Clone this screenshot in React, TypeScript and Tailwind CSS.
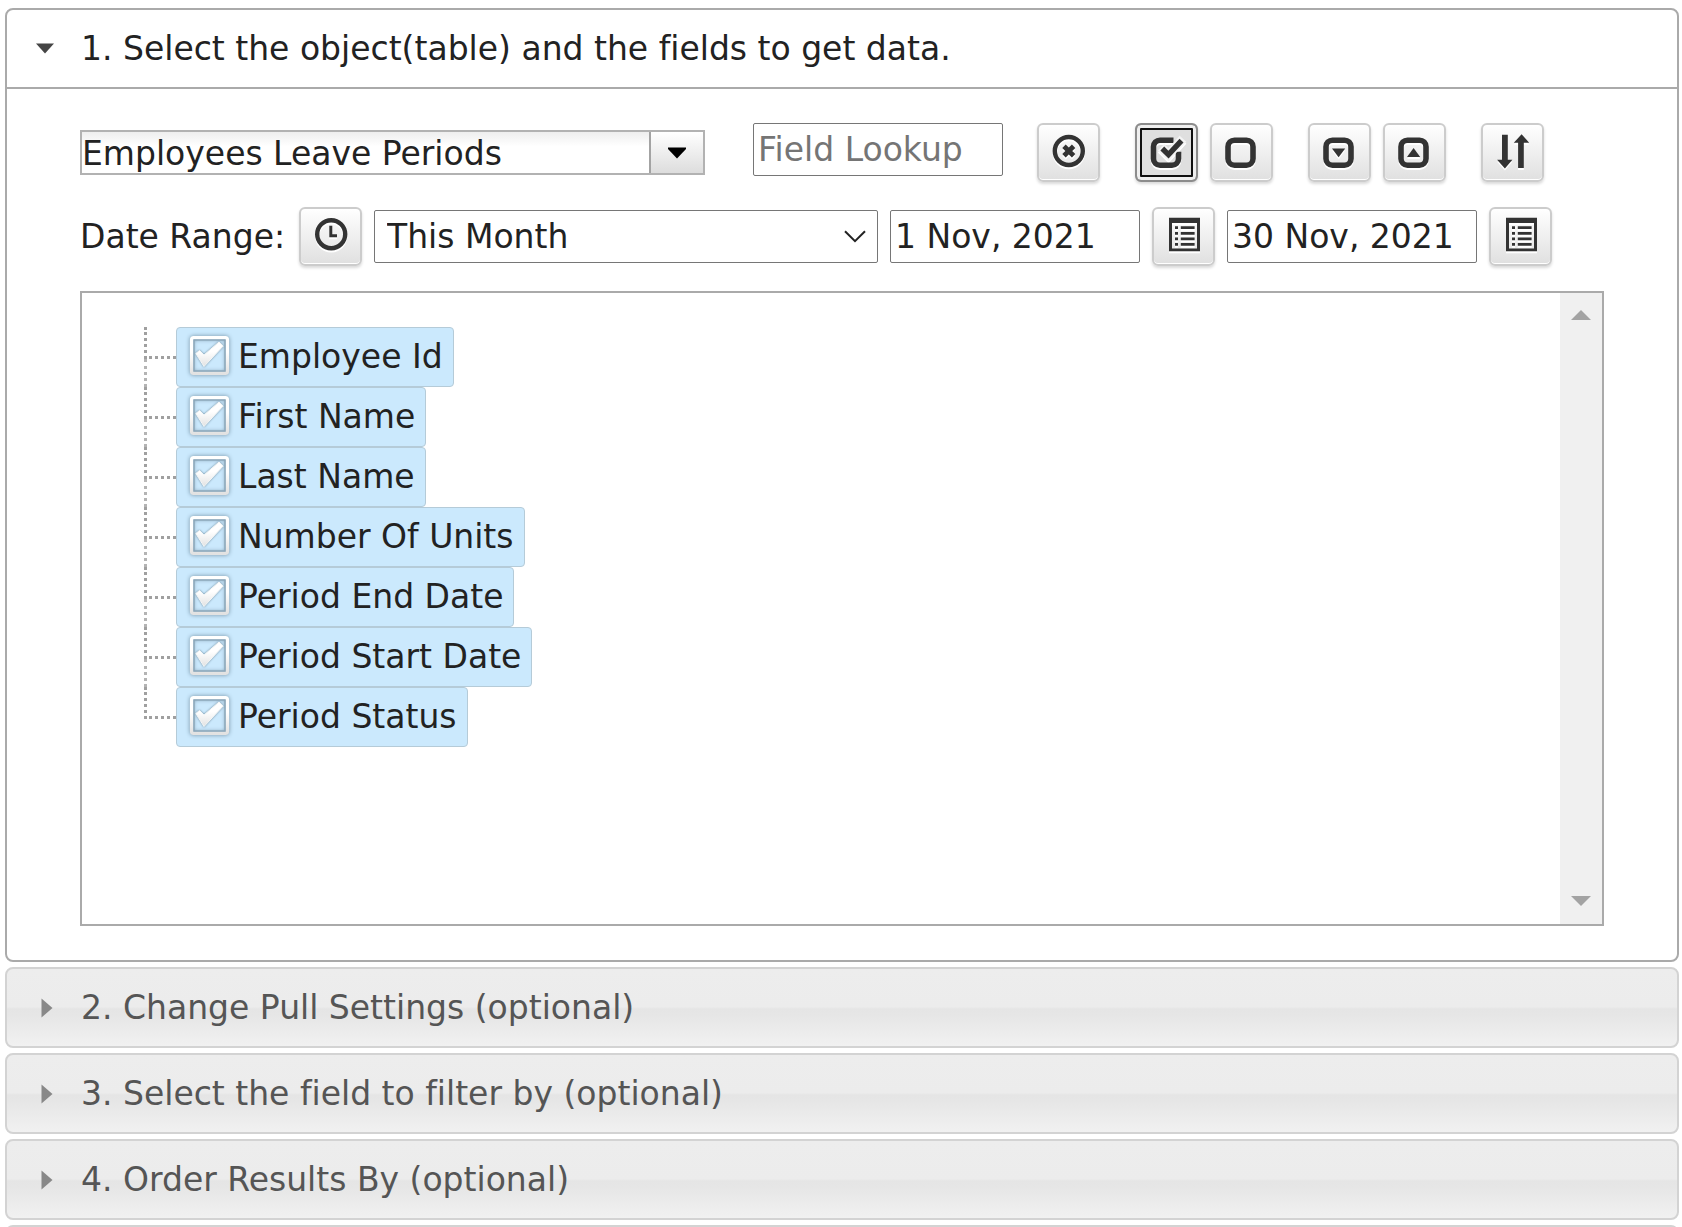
import React, { useState } from 'react';

const INK = '#333333';

function Icon({ children }: { children: React.ReactNode }) {
  return (
    <svg viewBox="0 0 40 40" className="size-10 shrink-0 drop-shadow-[0_2px_0_#ffffff]" fill="none" aria-hidden="true">
      {children}
    </svg>
  );
}

const ClockIcon = () => (
  <Icon>
    <circle cx="20.2" cy="17.2" r="14" stroke={INK} strokeWidth="4.4" />
    <path d="M19.8 8.7V18.7H26" stroke={INK} strokeWidth="3" />
  </Icon>
);

const ClearIcon = () => (
  <Icon>
    <circle cx="19.8" cy="18" r="14" stroke={INK} strokeWidth="4.4" />
    <path d="M15 13.2L24.6 22.8M24.6 13.2L15 22.8" stroke={INK} strokeWidth="4.8" />
  </Icon>
);

const CheckIcon = () => (
  <Icon>
    <path d="M26.5 7.2H13A6.5 6.5 0 0 0 6.5 13.7V25.7A6.5 6.5 0 0 0 13 32.2H25A6.5 6.5 0 0 0 31.5 25.7V18.7" stroke={INK} strokeWidth="5.6" />
    <path d="M14 14.2L21.5 21.7L36 5.7" stroke="#f4f4f4" strokeWidth="9" />
    <path d="M15.3 15.5L21.5 21.7L34.5 7.7" stroke={INK} strokeWidth="5.4" />
  </Icon>
);

const BoxShape = () => <rect x="6" y="7.2" width="25" height="25" rx="6.5" stroke={INK} strokeWidth="5.6" />;

const SquareIcon = () => (
  <Icon>
    <BoxShape />
  </Icon>
);

const SquareDownIcon = () => (
  <Icon>
    <BoxShape />
    <path d="M12 15.5H25.2L18.6 24.3Z" fill={INK} />
  </Icon>
);

const SquareUpIcon = () => (
  <Icon>
    <BoxShape />
    <path d="M12 23.9H25.2L18.6 15.1Z" fill={INK} />
  </Icon>
);

const SortIcon = () => (
  <Icon>
    <path d="M9 1.7H14.8V26.7H19.4L11.9 35.4L4.1 26.7H9Z" fill={INK} />
    <path d="M25.1 35V9.7H20.8L28.6 1.3L36.2 9.7H30.8V35Z" fill={INK} />
  </Icon>
);

const ListIcon = () => (
  <Icon>
    <path fillRule="evenodd" d="M5 0.8H36V34.2H5ZM8 6V31.4H33V6Z" fill={INK} />
    <path
      d="M11 10.7H14M16.8 10.7H30.6M11 16.3H14M16.8 16.3H30.6M11 21.8H14M16.8 21.8H30.6M11 27.4H14M16.8 27.4H30.6"
      stroke={INK}
      strokeWidth="2.8"
    />
  </Icon>
);

function ToolButton({ label, active, children }: { label: string; active?: boolean; children: React.ReactNode }) {
  return (
    <button
      type="button"
      aria-label={label}
      aria-pressed={active}
      className={
        active
          ? 'flex h-[59px] w-[63px] shrink-0 items-center justify-center rounded-md border-2 border-[#8c8c8c] bg-[#dfdfdf] shadow-[inset_0_0_0_3px_#efefef,inset_0_0_0_5px_#101010,0_2px_3px_rgba(0,0,0,0.15)]'
          : 'flex h-[59px] w-[63px] shrink-0 items-center justify-center rounded-md border-2 border-[#cccccc] bg-linear-to-b from-white to-[#e0e0e0] shadow-[inset_0_-1px_0_#ffffff,0_2px_3px_rgba(0,0,0,0.15)]'
      }
    >
      {children}
    </button>
  );
}

function DateField({ label, value }: { label: string; value: string }) {
  return (
    <input
      type="text"
      aria-label={label}
      defaultValue={value}
      className="h-[53px] w-[250px] rounded-xs border border-[#767676] bg-white px-1"
    />
  );
}

function TreeCheck() {
  return (
    <svg viewBox="0 0 42 44" className="h-11 w-[42px] shrink-0 overflow-visible" fill="none" aria-hidden="true">
      <defs>
        <linearGradient id="tick" x1="0" y1="0" x2="0" y2="1">
          <stop offset="0.4" stopColor="#ffffff" />
          <stop offset="1" stopColor="#e2e2e2" />
        </linearGradient>
      </defs>
      <g className="drop-shadow-[0_0_2px_#6f8c9f]">
        <rect x="3.7" y="4.7" width="35.6" height="35.6" rx="2" stroke="url(#tick)" strokeWidth="3.6" />
      </g>
      <rect x="6" y="7" width="31" height="31" stroke="#8aa5b8" strokeWidth="1.4" />
      <g className="drop-shadow-[0_0_1px_#6f8c9f]">
        <path d="M7.8 20.5L11.5 17.5L16 22L31 9L35.2 13L16 33.5Z" fill="url(#tick)" stroke="#f4f6f7" strokeWidth="1" strokeLinejoin="round" />
      </g>
    </svg>
  );
}

function TreeRow({ name, last }: { name: string; last: boolean }) {
  return (
    <li className="flex h-15">
      <span aria-hidden="true" className="flex w-8 flex-col">
        <span className="h-8 border-b-3 border-l-3 border-dotted border-[#a0a0a0]" />
        {!last && <span className="flex-1 border-l-3 border-dotted border-[#b4b4b4]" />}
      </span>
      <label className="flex items-center gap-2 rounded-[4px] border border-[#b5cbd8] bg-[#cbe9fd] pr-2.5 pl-[11px]">
        <input type="checkbox" defaultChecked className="sr-only" />
        <span className="-mt-1">
          <TreeCheck />
        </span>
        {name}
      </label>
    </li>
  );
}

const FIELDS = [
  'Employee Id',
  'First Name',
  'Last Name',
  'Number Of Units',
  'Period End Date',
  'Period Start Date',
  'Period Status',
];

const CLOSED = ['2. Change Pull Settings (optional)', '3. Select the field to filter by (optional)', '4. Order Results By (optional)', ''];

function ClosedSection({ title }: { title: string }) {
  return (
    <button
      type="button"
      aria-expanded="false"
      className="flex h-[81px] w-full shrink-0 items-center rounded-lg border-2 border-[#d3d3d3] bg-[linear-gradient(#ededed,#ececec_49%,#e5e5e5_52%,#e6e6e6_60%,#f1f1f1)] text-left text-[#555555]"
    >
      <span className="flex w-[74px] pl-[34px]">
        <svg viewBox="0 0 12 20" className="h-5 w-3" aria-hidden="true">
          <path d="M0.5 0.5L11.5 10L0.5 19.5Z" fill="#888888" />
        </svg>
      </span>
      {title}
    </button>
  );
}

export default function App() {
  const [query, setQuery] = useState('');
  return (
    <main className="flex h-screen flex-col gap-[5px] overflow-hidden bg-white pt-2 pr-[3px] pl-[5px] font-['DejaVu_Sans',Verdana,sans-serif] text-[33px] leading-10 text-[#222222] [font-variant-ligatures:none]">
      <section className="shrink-0 rounded-lg border-2 border-[#aaaaaa] bg-white">
        <h2 className="border-b-2 border-[#aaaaaa]">
          <button type="button" aria-expanded="true" className="flex h-[77px] w-full items-center text-left">
            <span className="flex w-[74px] pl-[29px]">
              <svg viewBox="0 0 18 11" className="h-[11px] w-[18px]" aria-hidden="true">
                <path d="M0 0.5H18L9 10.5Z" fill="#454545" />
              </svg>
            </span>
            1. Select the object(table) and the fields to get data.
          </button>
        </h2>

        <div className="flex flex-col gap-[25px] px-[73px] pt-[34px] pb-[34px]">
          <div className="flex items-center">
            <div className="flex h-[45px] w-[625px] border-2 border-[#b2b2b2]">
              <input
                type="text"
                aria-label="Object"
                defaultValue="Employees Leave Periods"
                className="min-w-0 flex-1 bg-linear-to-b from-[#eeeeee] to-white to-35% pt-0.5"
              />
              <button
                type="button"
                aria-label="Show objects"
                className="flex w-[54px] items-center justify-center border-l-2 border-[#a3a3a3] bg-linear-to-b from-white to-[#dddddd]"
              >
                <svg viewBox="0 0 18 12" className="h-3 w-[18px]" aria-hidden="true">
                  <path d="M0 0.5H18V2L9 11.5L0 2Z" fill="#000000" />
                </svg>
              </button>
            </div>
            <input
              type="text"
              aria-label="Field Lookup"
              placeholder="Field Lookup"
              value={query}
              onChange={(e) => setQuery(e.target.value)}
              className="ml-12 h-[53px] w-[250px] self-start rounded-xs border border-[#767676] bg-white px-1 placeholder:text-[#757575]"
            />
            <div className="ml-[34px] flex gap-[35px]">
              <ToolButton label="Clear lookup">
                <ClearIcon />
              </ToolButton>
              <div className="flex gap-3">
                <ToolButton label="Select all" active>
                  <CheckIcon />
                </ToolButton>
                <ToolButton label="Select none">
                  <SquareIcon />
                </ToolButton>
              </div>
              <div className="flex gap-3">
                <ToolButton label="Expand all">
                  <SquareDownIcon />
                </ToolButton>
                <ToolButton label="Collapse all">
                  <SquareUpIcon />
                </ToolButton>
              </div>
              <ToolButton label="Sort">
                <SortIcon />
              </ToolButton>
            </div>
          </div>

          <div className="flex items-center gap-3">
            <label htmlFor="range" className="w-[207px] shrink-0 whitespace-nowrap">
              Date Range:
            </label>
            <ToolButton label="Date range presets">
              <ClockIcon />
            </ToolButton>
            <div className="relative">
              <select
                id="range"
                className="h-[53px] w-[504px] appearance-none rounded-xs border border-[#767676] bg-white px-3"
              >
                <option>This Month</option>
              </select>
              <svg
                viewBox="0 0 22 13"
                className="pointer-events-none absolute top-5 right-3 h-[13px] w-[22px]"
                fill="none"
                aria-hidden="true"
              >
                <path d="M1 1.2L11 11.2L21 1.2" stroke="#222222" strokeWidth="2" />
              </svg>
            </div>
            <DateField label="Start date" value="1 Nov, 2021" />
            <ToolButton label="Pick start date">
              <ListIcon />
            </ToolButton>
            <DateField label="End date" value="30 Nov, 2021" />
            <ToolButton label="Pick end date">
              <ListIcon />
            </ToolButton>
          </div>

          <div className="flex h-[635px] border-2 border-[#aaaaaa]">
            <ul className="flex-1 pt-[34px] pl-[62px]">
              {FIELDS.map((name, i) => (
                <TreeRow key={name} name={name} last={i === FIELDS.length - 1} />
              ))}
            </ul>
            <div className="flex w-[42px] flex-col items-center justify-between bg-[#f0f0f0] pt-[17px] pb-[18px]">
              <svg viewBox="0 0 20 10" className="h-2.5 w-5" aria-hidden="true">
                <path d="M0 10L10 0L20 10Z" fill="#a3a3a3" />
              </svg>
              <svg viewBox="0 0 20 10" className="h-2.5 w-5" aria-hidden="true">
                <path d="M0 0H20L10 10Z" fill="#a3a3a3" />
              </svg>
            </div>
          </div>
        </div>
      </section>

      {CLOSED.map((title) => (
        <ClosedSection key={title} title={title} />
      ))}
    </main>
  );
}
